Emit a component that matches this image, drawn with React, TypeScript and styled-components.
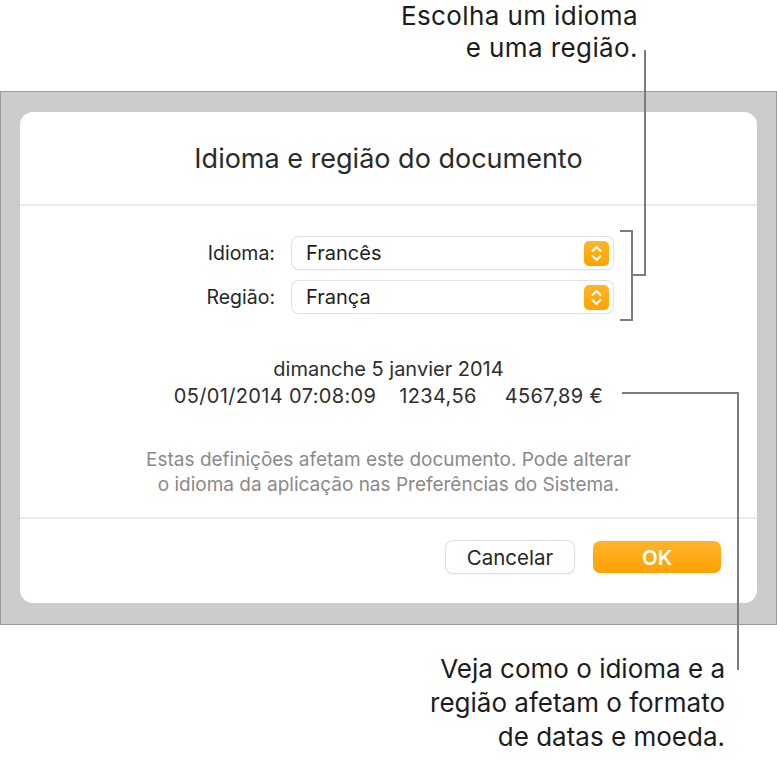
import React from 'react';
import styled, { createGlobalStyle } from 'styled-components';

const GlobalStyle = createGlobalStyle`
  html, body {
    margin: 0;
    padding: 0;
    background: #fff;
  }
  body {
    font-family: Inter, Roboto, "Noto Sans", "Liberation Sans", sans-serif;
    -webkit-font-smoothing: antialiased;
  }
`;

const Page = styled.div`
  position: relative;
  width: 777px;
  height: 764px;
  background: #fff;
  overflow: hidden;
`;

const Callout = styled.div<{ height: number; right: number }>`
  height: ${(p) => p.height}px;
  box-sizing: border-box;
  padding-right: ${(p) => p.right}px;
  text-align: right;
  font-size: 26px;
  color: #1c1c1c;
`;

const TopCallout = styled(Callout)`
  line-height: 32px;
  letter-spacing: 0.4px;
`;

const BottomCallout = styled(Callout)`
  padding-top: 27px;
  line-height: 34px;
`;

const Backdrop = styled.div`
  box-sizing: border-box;
  width: 777px;
  height: 534px;
  background: #cccccc;
  border: 1px solid #9a9a9a;
  padding: 20px 19px 21px 19px;
`;

const Dialog = styled.div`
  height: 100%;
  background: #fff;
  border-radius: 13px;
  display: flex;
  flex-direction: column;
`;

const Header = styled.div`
  height: 94px;
  display: flex;
  align-items: center;
  justify-content: center;
  font-size: 27px;
  color: #2b2b2b;
  border-bottom: 2px solid #ebebeb;
  padding-top: 1px;
  box-sizing: border-box;
`;

const Body = styled.div`
  flex: 1;
  display: flex;
  flex-direction: column;
  align-items: center;
  border-bottom: 2px solid #ebebeb;
  padding-top: 31px;
`;

const Form = styled.div`
  align-self: flex-start;
  margin-left: 181px;
  display: grid;
  grid-template-columns: 74px 321px;
  column-gap: 17px;
  row-gap: 12px;
  align-items: center;
`;

const Label = styled.label`
  text-align: right;
  font-size: 19.5px;
  color: #262626;
  white-space: nowrap;
`;

const Popup = styled.div`
  position: relative;
  height: 32px;
  box-sizing: border-box;
  border-radius: 7px;
  background: #fff;
  box-shadow: 0 0 0 1px #e2e2e2, 0 1px 2px rgba(0, 0, 0, 0.12);
  display: flex;
  align-items: center;
  padding-left: 14px;
  font-size: 20px;
  color: #1e1e1e;
`;

const Stepper = styled.span`
  position: absolute;
  right: 4px;
  top: 4px;
  width: 25px;
  height: 25px;
  border-radius: 5px;
  background: linear-gradient(#ffb52a, #ffa300);
  display: flex;
  align-items: center;
  justify-content: center;
`;

const Sample = styled.div`
  margin-top: 43px;
  display: flex;
  flex-direction: column;
  align-items: center;
  font-size: 20px;
  line-height: 27px;
  color: #2e2e2e;
`;

const SampleRow = styled.div`
  display: flex;
  letter-spacing: 0.35px;
`;

const Amount = styled.span<{ gap: number }>`
  margin-left: ${(p) => p.gap}px;
`;

const Note = styled.p`
  margin: 37px 0 0 0;
  text-align: center;
  font-size: 19px;
  line-height: 25px;
  color: #8a8a8a;
`;

const Footer = styled.div`
  height: 84px;
  display: flex;
  justify-content: flex-end;
  align-items: flex-start;
  gap: 19px;
  padding: 22px 36px 0 0;
  box-sizing: border-box;
`;

const Button = styled.button<{ primary?: boolean }>`
  width: 128px;
  height: 32px;
  border: none;
  border-radius: 7px;
  font-family: inherit;
  font-size: 20.5px;
  cursor: pointer;
  color: ${(p) => (p.primary ? '#fff' : '#262626')};
  font-weight: ${(p) => (p.primary ? 600 : 400)};
  background: ${(p) => (p.primary ? 'linear-gradient(#ffb42c, #ffa100)' : '#fff')};
  box-shadow: ${(p) =>
    p.primary ? 'none' : '0 0 0 1px #e0e0e0, 0 1px 2px rgba(0, 0, 0, 0.15)'};
`;

const Leaders = styled.svg`
  position: absolute;
  left: 0;
  top: 0;
  pointer-events: none;
`;

const Chevrons = () => (
  <svg width="13" height="19" viewBox="0 0 13 19" fill="none">
    <path d="M2.5 7 L6.5 3 L10.5 7" stroke="#fff" strokeWidth="2" strokeLinecap="round" strokeLinejoin="round" />
    <path d="M2.5 12 L6.5 16 L10.5 12" stroke="#fff" strokeWidth="2" strokeLinecap="round" strokeLinejoin="round" />
  </svg>
);

const Select = ({ value }: { value: string }) => (
  <Popup>
    {value}
    <Stepper>
      <Chevrons />
    </Stepper>
  </Popup>
);

export default function App() {
  return (
    <>
      <GlobalStyle />
      <Page>
        <TopCallout height={91} right={139}>
          Escolha um idioma
          <br />e uma região.
        </TopCallout>
        <Backdrop>
          <Dialog>
            <Header>Idioma e região do documento</Header>
            <Body>
              <Form>
                <Label>Idioma:</Label>
                <Select value="Francês" />
                <Label>Região:</Label>
                <Select value="França" />
              </Form>
              <Sample>
                <div>dimanche 5 janvier 2014</div>
                <SampleRow>
                  <span>05/01/2014 07:08:09</span>
                  <Amount gap={23}>1234,56</Amount>
                  <Amount gap={28}>4567,89 €</Amount>
                </SampleRow>
              </Sample>
              <Note>
                Estas definições afetam este documento. Pode alterar
                <br />o idioma da aplicação nas Preferências do Sistema.
              </Note>
            </Body>
            <Footer>
              <Button>Cancelar</Button>
              <Button primary>OK</Button>
            </Footer>
          </Dialog>
        </Backdrop>
        <BottomCallout height={139} right={52}>
          Veja como o idioma e a
          <br />
          região afetam o formato
          <br />
          de datas e moeda.
        </BottomCallout>
        <Leaders width="777" height="764" viewBox="0 0 777 764">
          <g stroke="#7c7c7c" strokeWidth="2" fill="none">
            <path d="M645 50 V275 H632" />
            <path d="M620 231 H632 V320 H620" />
            <path d="M622 393 H738 V670" />
          </g>
        </Leaders>
      </Page>
    </>
  );
}
